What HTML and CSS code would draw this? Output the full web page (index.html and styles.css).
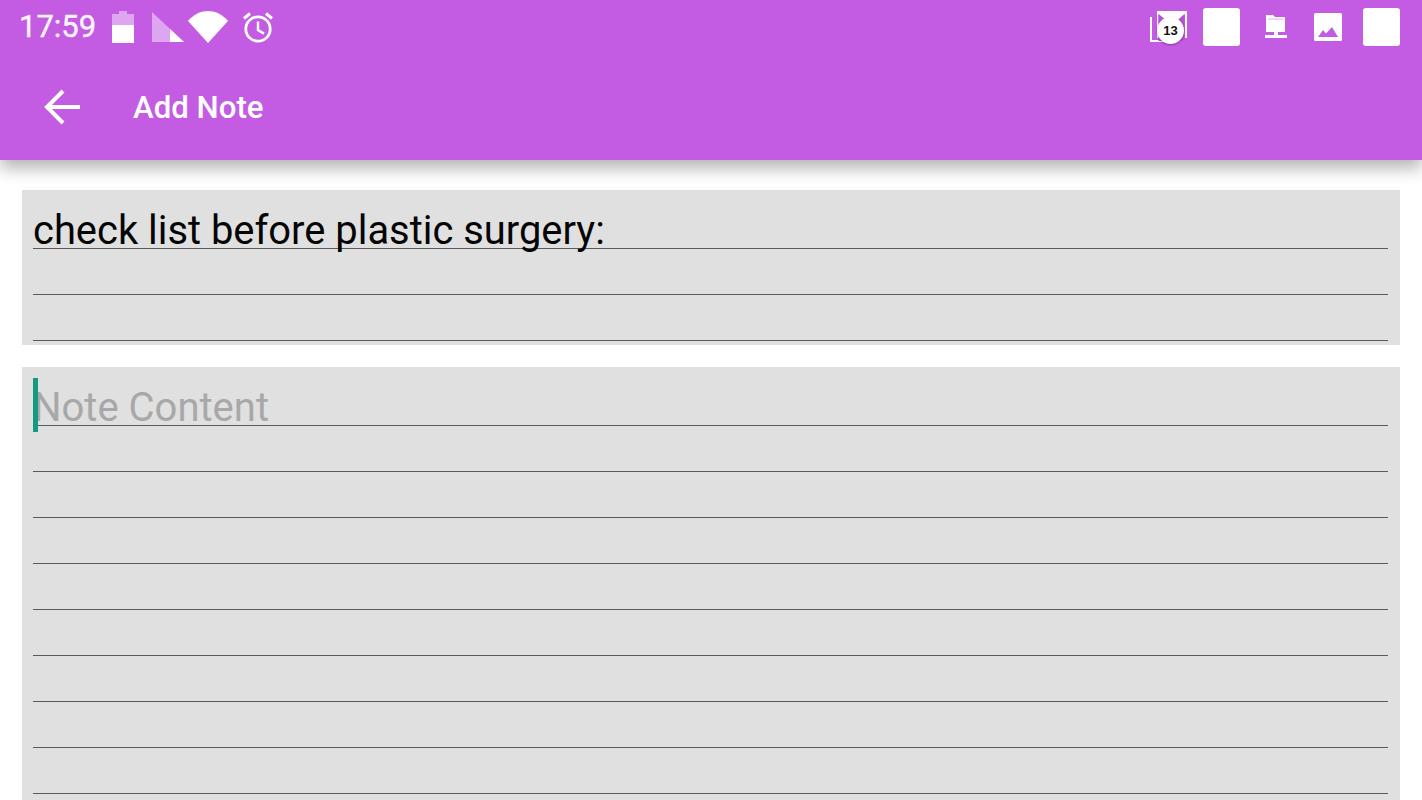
FILE: index.html
```html
<!DOCTYPE html>
<html lang="en">
<head>
  <meta charset="UTF-8">
  <title>Add Note</title>
  <link rel="stylesheet" href="styles.css">
</head>
<body>

  <header class="app-header">
    <div class="status-bar">
      <div class="status-left">
        <span class="clock">17:59</span>
        <svg class="ic-battery" width="22" height="32" viewBox="0 0 22 32">
          <path d="M7 0h8v3h7v29H0V3h7z" fill="#fff" fill-opacity=".45"/>
          <path d="M0 14h22v18H0z" fill="#fff"/>
        </svg>
        <svg class="ic-signal" width="32" height="30" viewBox="0 0 32 30">
          <path d="M0 0L32 30H0z" fill="#fff" fill-opacity=".45"/>
          <path d="M18 17L32 30H18z" fill="#fff"/>
        </svg>
        <svg class="ic-wifi" width="40" height="32" viewBox="0 0 40 32">
          <path d="M0 10C5 4 12 0 20 0s15 4 20 10L20 32z" fill="#fff"/>
        </svg>
        <svg class="ic-alarm" width="32" height="32" viewBox="0 0 32 32" fill="none" stroke="#fff">
          <circle cx="16" cy="18" r="12.2" stroke-width="2.8"/>
          <path d="M16 10.5V19l6 3.6" stroke-width="2.4"/>
          <path d="M2 7.5L8 2.5M30 7.5L24 2.5" stroke-width="3"/>
        </svg>
      </div>
      <div class="status-right">
        <span class="mail-icon">
          <svg width="38" height="34" viewBox="0 0 38 34">
            <path d="M0 7h2v23h16v2H0z" fill="#fff"/>
            <path d="M7 1h30v27h-2V4l-9 8h-8L8.500 4v24H7z" fill="#fff"/>
            <path d="M8.500 4l9 8h8l9-8v25l-2 2H8.500z" fill="#b451d4"/>
          </svg>
          <span class="mail-badge">13</span>
        </span>
        <span class="blank-icon"></span>
        <svg class="ic-folder" width="22" height="24" viewBox="0 0 22 24">
          <path d="M1 0h7l2 2h9a1 1 0 0 1 1 1v14H1z" fill="#fff"/>
          <path d="M3 4h15" stroke="#e3aff3" stroke-width="1" fill="none"/>
          <path d="M9 17h4v3h9v3H13h-4H0v-3h9z" fill="#fff"/>
        </svg>
        <svg class="ic-image" width="28" height="28" viewBox="0 0 28 28">
          <rect width="28" height="28" rx="1.500" fill="#fff"/>
          <path d="M4 24l5-7 3 3.500L18 14l6 10z" fill="#c45ce3"/>
        </svg>
        <span class="blank-icon"></span>
      </div>
    </div>
    <div class="toolbar">
      <svg class="ic-back" width="38" height="38" viewBox="0 0 38 38" fill="none" stroke="#fff" stroke-width="4">
        <path d="M37 19H4M20 3L4 19l16 16"/>
      </svg>
      <h1 class="toolbar-title">Add Note</h1>
    </div>
  </header>

  <main class="content">
    <section class="paper title-paper">
      <div class="ruled-row"><span class="title-text">check list before plastic surgery:</span></div>
      <div class="ruled-row"></div>
      <div class="ruled-row"></div>
    </section>

    <section class="paper note-paper">
      <div class="ruled-row">
        <span class="caret"></span>
        <span class="placeholder">Note Content</span>
      </div>
      <div class="ruled-row"></div>
      <div class="ruled-row"></div>
      <div class="ruled-row"></div>
      <div class="ruled-row"></div>
      <div class="ruled-row"></div>
      <div class="ruled-row"></div>
      <div class="ruled-row"></div>
      <div class="ruled-row"></div>
    </section>
  </main>

</body>
</html>
```

FILE: styles.css
```css
html, body {
  margin: 0;
  height: 100%;
  overflow: hidden;
}
body {
  display: flex;
  flex-direction: column;
  font-family: Roboto, "Noto Sans", sans-serif;
  background: #fff;
}
.app-header {
  position: relative;
  z-index: 2;
  flex: none;
  height: 160px;
  background: #c45ce3;
  box-shadow: 0 8px 16px rgba(0, 0, 0, 0.3);
  color: #fff;
}
.status-bar {
  height: 54px;
  display: flex;
  justify-content: space-between;
  align-items: center;
  padding: 0 22px 0 19px;
}
.status-left, .status-right {
  display: flex;
  align-items: center;
}
.clock {
  font-size: 31px;
  width: 93px;
  margin-top: -2px;
  color: rgba(255, 255, 255, 0.95);
  -webkit-text-stroke: 0.4px rgba(255, 255, 255, 0.95);
}
.ic-signal { margin-left: 18px; }
.ic-wifi { margin-left: 4px; }
.ic-alarm { margin-left: 14px; }
.mail-icon {
  position: relative;
  width: 38px;
  height: 34px;
  margin-right: 15px;
}
.mail-badge {
  position: absolute;
  left: 7px;
  top: 7px;
  width: 27px;
  height: 27px;
  border-radius: 50%;
  background: #fff;
  box-shadow: 0 1px 2px rgba(60, 30, 70, 0.5);
  color: #111;
  font: bold 13px/27px "Liberation Sans", sans-serif;
  text-align: center;
}
.blank-icon {
  width: 37px;
  height: 38px;
  border-radius: 3px;
  background: #fff;
}
.ic-folder { margin: 0 27px 0 25px; }
.ic-image { margin-right: 21px; }
.toolbar {
  height: 106px;
  display: flex;
  align-items: center;
  padding-left: 43px;
}
.ic-back {
  flex: none;
}
.toolbar-title {
  margin: 0 0 0 52px;
  font-size: 31.2px;
  font-weight: 500;
}
.content {
  flex: 1;
  min-height: 0;
  display: flex;
  flex-direction: column;
  padding: 30px 22px 0;
}
.paper {
  background: #e0e0e0;
  padding: 13px 12px 4px 11px;
}
.note-paper {
  flex: 1;
  min-height: 0;
  margin-top: 22px;
  padding-bottom: 0;
}
.ruled-row {
  position: relative;
  height: 46px;
  box-sizing: border-box;
  border-bottom: 1px solid #5a5a5a;
  line-height: 56px;
  font-size: 40px;
  white-space: nowrap;
}
.title-text {
  font-size: 39.9px;
  color: #050505;
}
.placeholder {
  color: #a8a8a8;
}
.caret {
  position: absolute;
  left: 0;
  top: -2px;
  width: 4.5px;
  height: 54px;
  background: #139a83;
}
```
